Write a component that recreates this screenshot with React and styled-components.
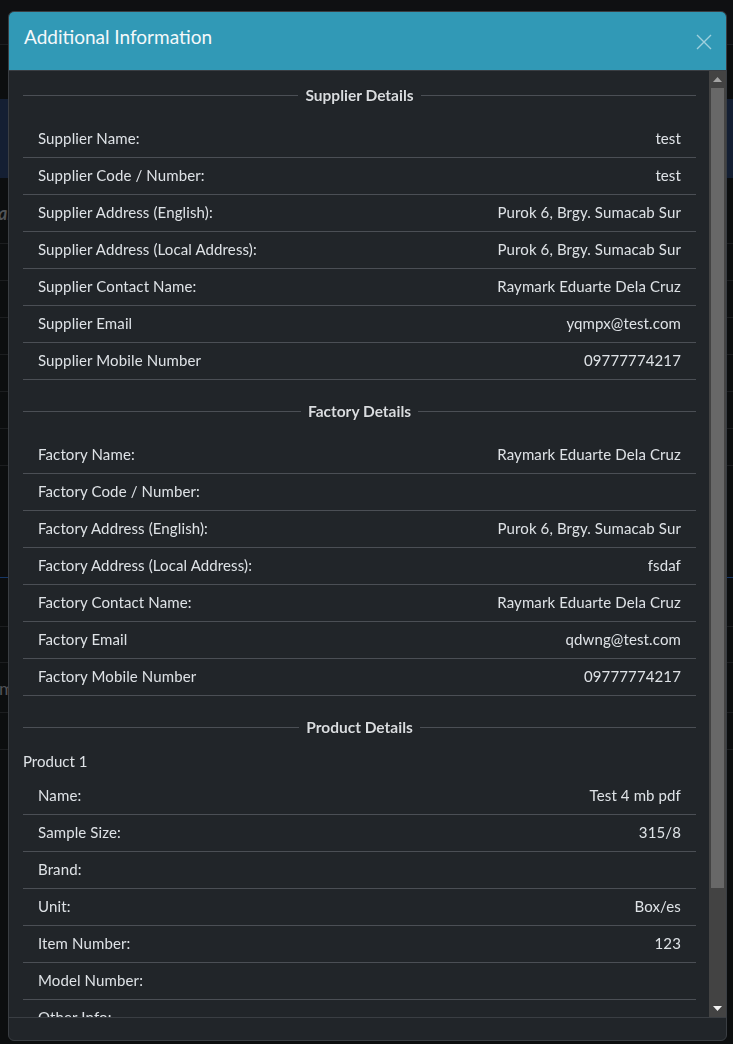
import React from "react";
import styled, { createGlobalStyle } from "styled-components";

const GlobalStyle = createGlobalStyle`
  html, body { margin: 0; padding: 0; }
  body {
    background: #111315;
    font-family: Lato, "Noto Sans", sans-serif;
    color: #dee2e6;
    overflow: hidden;
  }
  * { box-sizing: border-box; }
`;

/* ---------- underlying (dimmed) page ---------- */
const Page = styled.div`
  height: 1044px;
  overflow: hidden;
  display: flex;
  flex-direction: column;
`;
const NavBar = styled.div`
  height: 45px;
  background: #141619;
  border-bottom: 1px solid #25282c;
  flex: none;
`;
const Banner = styled.div`
  margin-top: 54px;
  height: 79px;
  background: #1b2a45;
  flex: none;
`;
const BgRow = styled.div`
  height: ${(p) => p.$h || 37}px;
  border-bottom: 1px solid ${(p) => p.$line || "#26282b"};
  font-size: 18px;
  font-style: ${(p) => (p.$italic ? "italic" : "normal")};
  font-weight: ${(p) => (p.$italic ? 700 : 400)};
  color: #6b6e73;
  display: flex;
  align-items: ${(p) => (p.$top ? "flex-start" : "center")};
  padding-top: ${(p) => (p.$top ? "24px" : "0")};
  flex: none;
  overflow: hidden;
  white-space: nowrap;
`;
const BgText = styled.span`
  margin-left: ${(p) => p.$shift || 0}px;
`;

/* ---------- modal ---------- */
const Backdrop = styled.div`
  position: fixed;
  inset: 0;
  background: rgba(0, 0, 0, 0.25);
`;
const Modal = styled.div`
  position: fixed;
  top: 11px;
  left: 8px;
  width: 719px;
  height: 1030px;
  display: flex;
  flex-direction: column;
  background: #212529;
  border: 1px solid #3a3e43;
  border-radius: 6px;
  overflow: hidden;
`;
const Header = styled.div`
  height: 59px;
  flex: none;
  background: #3199b6;
  border-bottom: 1px solid #3a3e43;
  display: flex;
  align-items: center;
  justify-content: space-between;
  padding: 0 14px 0 15px;
`;
const Title = styled.h5`
  margin: -9px 0 0 0;
  font-family: Lato, sans-serif;
  font-weight: 400;
  font-size: 19px;
  line-height: 24px;
  color: #f4f8fa;
`;
const CloseButton = styled.button`
  border: 0;
  background: transparent;
  padding: 0;
  width: 17px;
  height: 17px;
  display: flex;
  align-items: center;
  justify-content: center;
  cursor: pointer;
  margin-top: 1px;
`;
const Body = styled.div`
  flex: 1;
  min-height: 0;
  display: flex;
`;
const Scroller = styled.div`
  flex: 1;
  overflow-y: auto;
  scrollbar-width: none;
  padding: 0 13px 35px 14px;
  &::-webkit-scrollbar { display: none; }
`;
const ScrollTrack = styled.div`
  width: 17px;
  flex: none;
  background: #434343;
  display: flex;
  flex-direction: column;
`;
const ScrollButton = styled.div`
  height: 17px;
  flex: none;
  display: flex;
  align-items: center;
  justify-content: center;
`;
const ThumbArea = styled.div`
  flex: 1;
  padding: 0 2px;
`;
const Thumb = styled.div`
  height: 800px;
  background: #686868;
`;
const Footer = styled.div`
  height: 23px;
  flex: none;
  border-top: 1px solid #3a3e43;
`;

const Section = styled.section`
  & + & { margin-top: 7px; }
`;
const SectionTitle = styled.div`
  display: flex;
  align-items: center;
  gap: 7px;
  padding: 15px 0 17px;
  font-weight: 700;
  font-size: 15.5px;
  line-height: 18px;
  color: #d9dcdf;
  text-shadow: 0 0 1px rgba(0, 0, 0, 0.6);
  &::before,
  &::after {
    content: "";
    flex: 1;
    height: 1px;
    background: #4b4f55;
  }
`;
const Row = styled.div`
  height: 37px;
  border-bottom: 1px solid #4b4f55;
  display: flex;
  align-items: center;
  justify-content: space-between;
  padding: 0 15px 2px;
  font-size: 15px;
  letter-spacing: 0.12px;
  color: #dee2e6;
`;
const Label = styled.span``;
const Value = styled.span`
  text-align: right;
`;
const ProductLabel = styled.div`
  font-size: 15px;
  line-height: 17px;
  height: 25px;
  color: #dee2e6;
`;

const supplier = [
  ["Supplier Name:", "test"],
  ["Supplier Code / Number:", "test"],
  ["Supplier Address (English):", "Purok 6, Brgy. Sumacab Sur"],
  ["Supplier Address (Local Address):", "Purok 6, Brgy. Sumacab Sur"],
  ["Supplier Contact Name:", "Raymark Eduarte Dela Cruz"],
  ["Supplier Email", "yqmpx@test.com"],
  ["Supplier Mobile Number", "09777774217"],
];
const factory = [
  ["Factory Name:", "Raymark Eduarte Dela Cruz"],
  ["Factory Code / Number:", ""],
  ["Factory Address (English):", "Purok 6, Brgy. Sumacab Sur"],
  ["Factory Address (Local Address):", "fsdaf"],
  ["Factory Contact Name:", "Raymark Eduarte Dela Cruz"],
  ["Factory Email", "qdwng@test.com"],
  ["Factory Mobile Number", "09777774217"],
];
const product = [
  ["Name:", "Test 4 mb pdf"],
  ["Sample Size:", "315/8"],
  ["Brand:", ""],
  ["Unit:", "Box/es"],
  ["Item Number:", "123"],
  ["Model Number:", ""],
  ["Other Info:", ""],
];

function DetailRows({ rows }) {
  return rows.map(([l, v]) => (
    <Row key={l}>
      <Label>{l}</Label>
      <Value>{v}</Value>
    </Row>
  ));
}

export default function App() {
  return (
    <>
      <GlobalStyle />
      <Page>
        <NavBar />
        <Banner />
        <BgRow $h={66} $italic $top>
          <BgText $shift={-2}>al</BgText>
        </BgRow>
        <BgRow />
        <BgRow />
        <BgRow />
        <BgRow />
        <BgRow />
        <BgRow />
        <BgRow $h={112} $line="#1e4a8a" />
        <BgRow $h={49} />
        <BgRow $h={36} />
        <BgRow $h={50}>
          <BgText $shift={-1}>m</BgText>
        </BgRow>
        <BgRow />
      </Page>
      <Backdrop />
      <Modal role="dialog">
        <Header>
          <Title>Additional Information</Title>
          <CloseButton aria-label="Close">
            <svg width="16" height="16" viewBox="0 0 16 16">
              <path
                d="M1 1 L15 15 M15 1 L1 15"
                stroke="#9fd0dd"
                strokeWidth="1.4"
                fill="none"
              />
            </svg>
          </CloseButton>
        </Header>
        <Body>
          <Scroller>
            <Section>
              <SectionTitle>Supplier Details</SectionTitle>
              <DetailRows rows={supplier} />
            </Section>
            <Section>
              <SectionTitle>Factory Details</SectionTitle>
              <DetailRows rows={factory} />
            </Section>
            <Section>
              <SectionTitle>Product Details</SectionTitle>
              <ProductLabel>Product 1</ProductLabel>
              <DetailRows rows={product} />
            </Section>
          </Scroller>
          <ScrollTrack aria-hidden="true">
            <ScrollButton>
              <svg width="9" height="5" viewBox="0 0 9 5">
                <polygon points="4.5,0 9,5 0,5" fill="#a3a3a3" />
              </svg>
            </ScrollButton>
            <ThumbArea>
              <Thumb />
            </ThumbArea>
            <ScrollButton>
              <svg width="9" height="5" viewBox="0 0 9 5">
                <polygon points="0,0 9,0 4.5,5" fill="#f2f2f2" />
              </svg>
            </ScrollButton>
          </ScrollTrack>
        </Body>
        <Footer />
      </Modal>
    </>
  );
}
